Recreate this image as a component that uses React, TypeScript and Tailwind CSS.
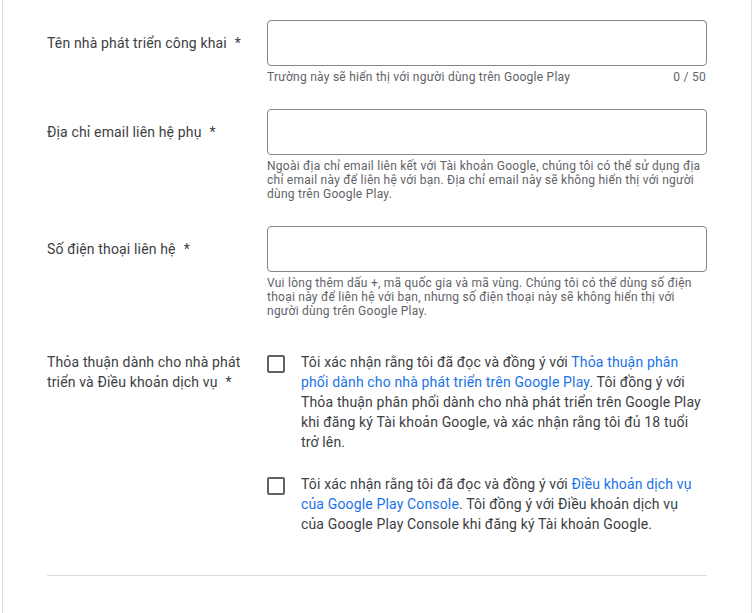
import React from 'react';

const Field = ({
  label,
  helper,
  counter,
  className = '',
}: {
  label: string;
  helper: React.ReactNode;
  counter?: string;
  className?: string;
}) => (
  <div className={`flex ${className}`}>
    <div className="w-[220px] shrink-0 pr-5 pt-[13px] text-[14px] leading-[20px] tracking-[0.15px] text-[#3c4043]">
      {label}
      <span className="ml-2">*</span>
    </div>
    <div className="w-[440px]">
      <div className="h-[46px] rounded-[4px] border border-[#80868b] bg-white" />
      <div className="mt-[4px] flex justify-between gap-4 text-[12px] leading-[14px] tracking-[0.25px] text-[#5f6368]">
        <span>{helper}</span>
        {counter && <span className="shrink-0 pr-[1px]">{counter}</span>}
      </div>
    </div>
  </div>
);

const Checkbox = () => (
  <div className="mt-[3px] h-[18px] w-[18px] shrink-0 rounded-[2px] border-2 border-[#5f6368]" />
);

const Link = ({ children }: { children: React.ReactNode }) => (
  <a className="text-[#1a73e8]">{children}</a>
);

export default function App() {
  return (
    <div className="h-[613px] overflow-hidden bg-white font-['Roboto',sans-serif]">
      <div className="mx-[2px] h-full border-x border-[#dadce0] px-[44px] pt-[20px]">
        <Field
          label="Tên nhà phát triển công khai"
          helper="Trường này sẽ hiển thị với người dùng trên Google Play"
          counter="0 / 50"
        />
        <Field
          className="mt-[25px]"
          label="Địa chỉ email liên hệ phụ"
          helper="Ngoài địa chỉ email liên kết với Tài khoản Google, chúng tôi có thể sử dụng địa chỉ email này để liên hệ với bạn. Địa chỉ email này sẽ không hiển thị với người dùng trên Google Play."
        />
        <Field
          className="mt-[25px]"
          label="Số điện thoại liên hệ"
          helper="Vui lòng thêm dấu +, mã quốc gia và mã vùng. Chúng tôi có thể dùng số điện thoại này để liên hệ với bạn, nhưng số điện thoại này sẽ không hiển thị với người dùng trên Google Play."
        />

        <div className="mt-[34px] flex">
          <div className="w-[220px] shrink-0 pr-5 text-[14px] leading-[20px] tracking-[0.15px] text-[#3c4043]">
            Thỏa thuận dành cho nhà phát triển và Điều khoản dịch vụ
            <span className="ml-2">*</span>
          </div>
          <div className="flex w-[440px] flex-col gap-[22px] pr-[4px] text-[14px] leading-[20px] tracking-[0.15px] text-[#3c4043]">
            <div className="flex gap-4">
              <Checkbox />
              <p>
                Tôi xác nhận rằng tôi đã đọc và đồng ý với{' '}
                <Link>Thỏa thuận phân phối dành cho nhà phát triển trên Google Play</Link>. Tôi đồng ý
                với Thỏa thuận phân phối dành cho nhà phát triển trên Google Play khi đăng ký Tài
                khoản Google, và xác nhận rằng tôi đủ 18 tuổi trở lên.
              </p>
            </div>
            <div className="flex gap-4">
              <Checkbox />
              <p>
                Tôi xác nhận rằng tôi đã đọc và đồng ý với{' '}
                <Link>Điều khoản dịch vụ của Google Play Console</Link>. Tôi đồng ý với Điều khoản
                dịch vụ của Google Play Console khi đăng ký Tài khoản Google.
              </p>
            </div>
          </div>
        </div>

        <div className="mt-[41px] border-t border-[#dadce0]" />

        <h3 className="mt-[36px] text-[16px] leading-[24px] text-[#202124]">Tổ chức của bạn</h3>
      </div>
    </div>
  );
}
